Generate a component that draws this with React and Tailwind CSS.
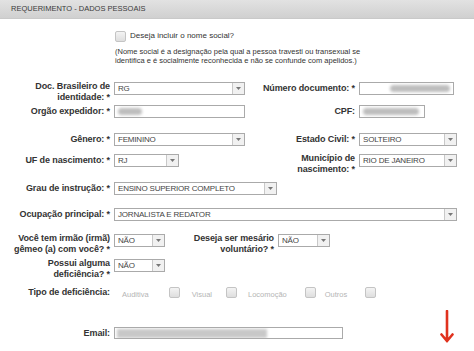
import React from 'react';

const font = { fontFamily: '"Liberation Sans", Arial, sans-serif' };

function Select({ value, width }) {
  return (
    <div className={`flex h-[13px] border border-[#aaa] bg-white ${width}`}>
      <span className="flex-1 truncate pl-[3px] text-[8px] leading-[11px] tracking-[-0.2px] text-[#444]">{value}</span>
      <span className="flex w-[12px] items-center justify-center border-l border-[#c8c8c8] bg-[#f1f1f1]">
        <svg width="5" height="3" viewBox="0 0 5 3"><path d="M0 0h5L2.5 3z" fill="#777" /></svg>
      </span>
    </div>
  );
}

function Input({ width, blur, blurWidth }) {
  return (
    <div className={`flex h-[13px] items-center overflow-hidden border border-[#aaa] bg-white ${width}`}>
      {blur && <span className={`ml-[3px] h-[7px] rounded-sm bg-[#bdbdbd] blur-[1.5px] ${blurWidth}`} />}
    </div>
  );
}

function Label({ children, width, two }) {
  return (
    <div className={`${width} shrink-0 pr-[4px] text-right text-[9px] font-bold leading-[11px] tracking-[-0.1px] text-[#333] ${two ? 'mt-[-1px]' : 'mt-[1px]'}`}>
      {children}
    </div>
  );
}

function Check() {
  return <span className="inline-block h-[11px] w-[11px] rounded-[2px] border border-[#c4c4c4] bg-gradient-to-b from-[#f4f4f4] to-[#dedede]" />;
}

export default function App() {
  return (
    <div className="h-[351px] w-[474px] overflow-hidden bg-white" style={font}>
      <div className="flex h-[19px] items-center border-b border-[#c9c9c9] bg-gradient-to-b from-[#e2e2e2] to-[#d0d0d0] pl-[11px] text-[7.5px] text-[#3a3a3a]">
        REQUERIMENTO - DADOS PESSOAIS
      </div>

      <div className="ml-[115px] mt-[11px] flex items-center gap-[4px]">
        <Check />
        <span className="text-[8px] text-[#333]">Deseja incluir o nome social?</span>
      </div>
      <div className="ml-[115px] mt-[5px] text-[7.5px] leading-[9px] text-[#333]">
        (Nome social é a designação pela qual a pessoa travesti ou transexual se<br />
        identifica e é socialmente reconhecida e não se confunde com apelidos.)
      </div>

      <div className="mt-[17px] flex flex-col">
        <div className="flex h-[23px] items-start">
          <Label width="w-[114px]" two>Doc. Brasileiro de<br />identidade: *</Label>
          <Select value="RG" width="w-[131px]" />
          <Label width="w-[114px]">Número documento: *</Label>
          <Input width="w-[95px]" blur blurWidth="w-[60px] ml-[30px]" />
        </div>
        <div className="flex h-[28px] items-start">
          <Label width="w-[114px]">Orgão expedidor: *</Label>
          <Input width="w-[131px]" blur blurWidth="w-[24px]" />
          <Label width="w-[114px]">CPF:</Label>
          <Input width="w-[66px]" blur blurWidth="w-[56px]" />
        </div>
        <div className="flex h-[21px] items-start">
          <Label width="w-[114px]">Gênero: *</Label>
          <Select value="FEMININO" width="w-[131px]" />
          <Label width="w-[114px]">Estado Civil: *</Label>
          <Select value="SOLTEIRO" width="w-[98px]" />
        </div>
        <div className="flex h-[28px] items-start">
          <Label width="w-[114px]">UF de nascimento: *</Label>
          <Select value="RJ" width="w-[65px]" />
          <Label width="w-[180px]" two>Município de<br />nascimento: *</Label>
          <Select value="RIO DE JANEIRO" width="w-[98px]" />
        </div>
        <div className="flex h-[26px] items-start">
          <Label width="w-[114px]">Grau de instrução: *</Label>
          <Select value="ENSINO SUPERIOR COMPLETO" width="w-[163px]" />
        </div>
        <div className="flex h-[26px] items-start">
          <Label width="w-[114px]">Ocupação principal: *</Label>
          <Select value="JORNALISTA E REDATOR" width="w-[343px]" />
        </div>
        <div className="flex h-[25px] items-start">
          <Label width="w-[114px]" two>Você tem irmão (irmã)<br />gêmeo (a) com você? *</Label>
          <Select value="NÃO" width="w-[51px]" />
          <Label width="w-[113px]" two>Deseja ser mesário<br />voluntário? *</Label>
          <Select value="NÃO" width="w-[52px]" />
        </div>
        <div className="flex h-[27px] items-start">
          <Label width="w-[114px]" two>Possui alguma<br />deficiência? *</Label>
          <Select value="NÃO" width="w-[51px]" />
        </div>
        <div className="flex h-[27px] items-start">
          <Label width="w-[114px]">Tipo de deficiência:</Label>
          <div className="mt-[1px] flex items-center text-[7.5px] text-[#b5b5b5]">
            <span className="ml-[8px]">Auditiva</span>
            <span className="ml-[20px]"><Check /></span>
            <span className="ml-[12px]">Visual</span>
            <span className="ml-[14px]"><Check /></span>
            <span className="ml-[11px]">Locomoção</span>
            <span className="ml-[18px]"><Check /></span>
            <span className="ml-[9px]">Outros</span>
            <span className="ml-[18px]"><Check /></span>
          </div>
        </div>
        <div className="mt-[14px] flex items-start">
          <Label width="w-[114px]">Email:</Label>
          <div className="flex h-[12px] w-[229px] items-center overflow-hidden border border-[#aaa] bg-white">
            <span className="ml-[2px] h-[9px] w-[150px] bg-[#c8c8c8] blur-[1.5px]" />
          </div>
          <svg className="ml-[97px] mt-[-17px]" width="14" height="33" viewBox="0 0 14 33">
            <path d="M7 1v30M1.5 24.5L7 31l5.5-6.5" stroke="#e0321e" strokeWidth="2.6" fill="none" strokeLinecap="round" />
          </svg>
        </div>
      </div>
    </div>
  );
}
